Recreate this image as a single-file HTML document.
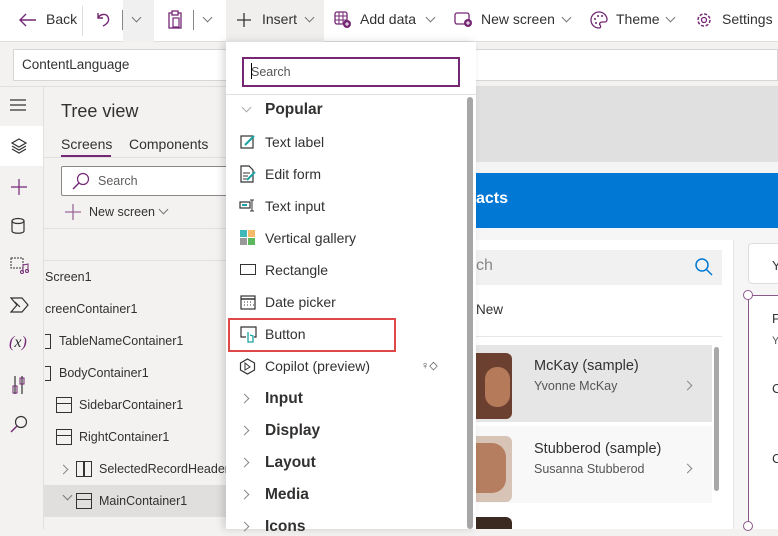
<!DOCTYPE html>
<html><head><style>
*{box-sizing:border-box;margin:0;padding:0}
body{width:778px;height:529px;overflow:hidden;position:relative;font-family:"Liberation Sans",sans-serif;background:#f3f2f1;color:#323130}
.a{position:absolute}
.tb{left:0;top:0;width:778px;height:42px;background:#fff;border-bottom:1px solid #e1dfdd}
.t{position:absolute;top:11px;font-size:14px;color:#323130;white-space:nowrap}
.chev{position:absolute;width:7px;height:7px;border-right:1px solid #777;border-bottom:1px solid #777;transform:rotate(45deg)}
.chr{position:absolute;width:7px;height:7px;border-right:1px solid #888;border-bottom:1px solid #888;transform:rotate(-45deg)}
.tree{position:absolute;left:44px;font-size:12.5px;color:#323130;white-space:nowrap}
.ico2{position:absolute;width:14px;height:16px;border:1.5px solid #333}
.ico2::after{content:"";position:absolute;left:0;right:0;top:5px;border-top:1.5px solid #333}
.di{position:absolute;left:265px;font-size:14px;color:#323130}
.dh{position:absolute;left:265px;font-size:15.5px;font-weight:bold;color:#323130}
</style></head><body>
<div class="a tb"></div>
<!-- toolbar -->
<svg class="a" style="left:18px;top:12px" width="20" height="16"><path d="M18 8H2M8 2L2 8l6 6" stroke="#742774" fill="none" stroke-width="1.4"/></svg>
<div class="t" style="left:46px">Back</div>
<div class="a" style="left:82px;top:6px;width:1px;height:30px;background:#ddd"></div>
<svg class="a" style="left:94px;top:10px" width="18" height="18"><path d="M4 3v5h5M4 8c2-4 8-5 10-1 2 4-1 7-5 9" stroke="#742774" fill="none" stroke-width="1.4"/></svg>
<div class="a" style="left:123px;top:0;width:31px;height:42px;background:#f0f0f0"></div>
<div class="a" style="left:122px;top:10px;width:1px;height:20px;background:#888"></div>
<div class="chev" style="left:133px;top:14px"></div>
<svg class="a" style="left:166px;top:10px" width="18" height="20"><rect x="3" y="3" width="12" height="15" stroke="#742774" fill="none" stroke-width="1.3"/><rect x="6" y="1" width="6" height="4" stroke="#742774" fill="#fff" stroke-width="1.3"/><rect x="7" y="8" width="6" height="9" stroke="#742774" fill="none" stroke-width="1.2"/></svg>
<div class="a" style="left:193px;top:10px;width:1px;height:20px;background:#888"></div>
<div class="chev" style="left:204px;top:14px"></div>
<div class="a" style="left:226px;top:0;width:98px;height:42px;background:#f0efee"></div>
<svg class="a" style="left:236px;top:12px" width="16" height="16"><path d="M8 1v14M1 8h14" stroke="#333" stroke-width="1.3"/></svg>
<div class="t" style="left:262px">Insert</div>
<div class="chev" style="left:306px;top:14px"></div>
<svg class="a" style="left:334px;top:11px" width="18" height="18"><rect x="1" y="1" width="12" height="12" rx="2" stroke="#742774" fill="none" stroke-width="1.3"/><path d="M1 5h12M1 9h12M5 1v12M9 1v12" stroke="#742774" stroke-width="1"/><circle cx="13" cy="13" r="4" fill="#742774"/><path d="M13 11v4M11 13h4" stroke="#fff"/></svg>
<div class="t" style="left:360px">Add data</div>
<div class="chev" style="left:427px;top:14px"></div>
<svg class="a" style="left:454px;top:12px" width="18" height="16"><rect x="1" y="1" width="14" height="11" rx="2" stroke="#742774" fill="none" stroke-width="1.3"/><circle cx="14" cy="11" r="4" fill="#742774"/><path d="M14 9v4M12 11h4" stroke="#fff"/></svg>
<div class="t" style="left:481px">New screen</div>
<div class="chev" style="left:563px;top:14px"></div>
<svg class="a" style="left:590px;top:11px" width="18" height="18"><path d="M9 1a8 8 0 1 0 0 16c2 0 2-2 1-3s0-3 2-3h3c2 0 2-2 2-3A8 8 0 0 0 9 1z" stroke="#742774" fill="none" stroke-width="1.3"/><circle cx="5" cy="8" r="1" fill="#742774"/><circle cx="8" cy="5" r="1" fill="#742774"/><circle cx="12" cy="5" r="1" fill="#742774"/><circle cx="6" cy="12" r="1" fill="#742774"/></svg>
<div class="t" style="left:616px">Theme</div>
<div class="chev" style="left:667px;top:14px"></div>
<svg class="a" style="left:695px;top:11px" width="18" height="18"><circle cx="9" cy="9" r="6" stroke="#742774" fill="none" stroke-width="1.5" stroke-dasharray="3 1.7"/><circle cx="9" cy="9" r="2.5" stroke="#742774" fill="none" stroke-width="1.3"/></svg>
<div class="t" style="left:722px">Settings</div>
<!-- formula bar -->
<div class="a" style="left:0;top:43px;width:778px;height:44px;background:#f3f2f1;border-bottom:1px solid #e1dfdd"></div>
<div class="a" style="left:13px;top:49px;width:765px;height:32px;background:#fff;border:1px solid #d6d6d6"></div>
<div class="a" style="left:22px;top:57px;font-size:13.5px">ContentLanguage</div>
<!-- left rail -->
<div class="a" style="left:0;top:87px;width:44px;height:442px;background:#f3f2f1;border-right:1px solid #e1dfdd"></div>
<div class="a" style="left:0;top:126px;width:43px;height:40px;background:#fff"></div>
<svg class="a" style="left:10px;top:98px" width="18" height="14"><path d="M0 2h16M0 7h16M0 12h16" stroke="#333" stroke-width="1.2"/></svg>
<svg class="a" style="left:10px;top:137px" width="18" height="18"><path d="M9 2l7 4-7 4-7-4zM2 9l7 4 7-4M2 12l7 4 7-4" stroke="#333" fill="none" stroke-width="1.2"/></svg>
<svg class="a" style="left:10px;top:178px" width="18" height="18"><path d="M9 1v16M1 9h16" stroke="#742774" stroke-width="1.2"/></svg>
<svg class="a" style="left:11px;top:217px" width="16" height="18"><ellipse cx="7" cy="4" rx="6" ry="2.5" stroke="#333" fill="none" stroke-width="1.2"/><path d="M1 4v10c0 3 12 3 12 0V4" stroke="#333" fill="none" stroke-width="1.2"/></svg>
<svg class="a" style="left:10px;top:257px" width="20" height="18"><rect x="1" y="1" width="12" height="10" stroke="#333" fill="none" stroke-dasharray="2 1"/><path d="M13 15V8l5-1v7" stroke="#742774" fill="none"/><circle cx="12" cy="15" r="1.5" stroke="#742774" fill="none"/><circle cx="17" cy="14" r="1.5" stroke="#742774" fill="none"/></svg>
<svg class="a" style="left:10px;top:297px" width="20" height="16"><path d="M1 1h11l6 7-6 7H1l6-7z M5 5l5 5M7 3" stroke="#333" fill="none" stroke-width="1.2"/></svg>
<div class="a" style="left:9px;top:334px;font-size:16px;font-style:italic;font-family:'Liberation Serif',serif;color:#742774">(<span style="color:#333">x</span>)</div>
<svg class="a" style="left:12px;top:375px" width="14" height="20"><path d="M3 1v18M10 1v18" stroke="#333" stroke-width="1.2"/><rect x="1" y="11" width="4" height="7" stroke="#742774" fill="none"/><rect x="8" y="3" width="4" height="6" stroke="#742774" fill="none"/></svg>
<svg class="a" style="left:10px;top:415px" width="18" height="18"><circle cx="11" cy="7" r="5.5" stroke="#333" fill="none" stroke-width="1.2"/><path d="M7 11l-6 6" stroke="#742774" stroke-width="1.4"/></svg>
<!-- tree panel -->
<div class="a" style="left:61px;top:101px;font-size:18px;color:#323130">Tree view</div>
<div class="a" style="left:61px;top:136px;font-size:14px">Screens</div>
<div class="a" style="left:61px;top:155px;width:50px;height:3px;background:#742774"></div>
<div class="a" style="left:129px;top:136px;font-size:14px">Components</div>
<div class="a" style="left:44px;top:157px;width:182px;height:1px;background:#e1dfdd"></div>
<div class="a" style="left:61px;top:166px;width:170px;height:30px;background:#fff;border:1px solid #8a8886;border-radius:2px"></div>
<svg class="a" style="left:72px;top:172px" width="18" height="18"><circle cx="11" cy="7" r="5.5" stroke="#742774" fill="none" stroke-width="1.2"/><path d="M7 11l-6 6" stroke="#742774" stroke-width="1.4"/></svg>
<div class="a" style="left:98px;top:174px;font-size:12.5px;color:#605e5c">Search</div>
<svg class="a" style="left:64px;top:203px" width="18" height="18"><path d="M9 1v16M1 9h16" stroke="#9a6a9a" stroke-width="1.3"/></svg>
<div class="a" style="left:89px;top:205px;font-size:12.5px;color:#323130">New screen</div>
<div class="chev" style="left:160px;top:206px"></div>
<div class="a" style="left:44px;top:228px;width:182px;height:1px;background:#e1dfdd"></div>
<div class="a" style="left:44px;top:260px;width:182px;height:1px;background:#e1dfdd"></div>
<div class="tree" style="top:270px;left:45px">Screen1</div>
<div class="tree" style="top:302px;left:45px">creenContainer1</div>
<div class="a" style="left:45px;top:334px;width:6px;height:15px;border:1.3px solid #333;border-left:none"></div>
<div class="tree" style="top:334px;left:59px">TableNameContainer1</div>
<div class="a" style="left:45px;top:366px;width:6px;height:15px;border:1.3px solid #333;border-left:none"></div>
<div class="tree" style="top:366px;left:59px">BodyContainer1</div>
<div class="ico2" style="left:56px;top:397px;width:16px"></div>
<div class="tree" style="top:398px;left:79px">SidebarContainer1</div>
<div class="ico2" style="left:56px;top:429px;width:16px"></div>
<div class="tree" style="top:430px;left:79px">RightContainer1</div>
<div class="chr" style="left:60px;top:466px"></div>
<div class="a" style="left:76px;top:461px;width:16px;height:16px;border:1.5px solid #333"></div>
<div class="a" style="left:83px;top:461px;width:1.5px;height:16px;background:#333"></div>
<div class="tree" style="top:462px;left:99px">SelectedRecordHeaderC</div>
<div class="a" style="left:44px;top:485px;width:182px;height:32px;background:#e1dfdd"></div>
<div class="chev" style="left:64px;top:492px"></div>
<div class="ico2" style="left:76px;top:493px;width:16px"></div>
<div class="tree" style="top:494px;left:99px">MainContainer1</div>
<!-- canvas -->
<div class="a" style="left:476px;top:87px;width:302px;height:442px;background:#e0e0e0"></div>
<div class="a" style="left:476px;top:162px;width:302px;height:11px;background:#f4f4f4"></div>
<div class="a" style="left:476px;top:173px;width:302px;height:55px;background:#0078d4"></div>
<div class="a" style="left:476px;top:190px;font-size:16px;font-weight:bold;color:#fff">acts</div>
<div class="a" style="left:476px;top:228px;width:302px;height:301px;background:#f6f6f6"></div>
<div class="a" style="left:476px;top:240px;width:258px;height:289px;background:#fff;border-right:1px solid #e6e6e6"></div>
<div class="a" style="left:476px;top:250px;width:246px;height:35px;background:#f1f1f1"></div>
<div class="a" style="left:476px;top:257px;font-size:16px;color:#888">ch</div>
<svg class="a" style="left:694px;top:257px" width="20" height="20"><circle cx="8" cy="8" r="6" stroke="#0078d4" fill="none" stroke-width="1.5"/><path d="M12 12l6 6" stroke="#0078d4" stroke-width="1.5"/></svg>
<div class="a" style="left:476px;top:302px;font-size:13.5px">New</div>
<div class="a" style="left:476px;top:336px;width:246px;height:1px;background:#e6e6e6"></div>
<div class="a" style="left:476px;top:345px;width:236px;height:77px;background:#e6e6e6"></div>
<div class="a" style="left:476px;top:353px;width:36px;height:66px;background:#6b4030;border-radius:0 6px 6px 0"></div>
<div class="a" style="left:485px;top:367px;width:25px;height:40px;background:#b47a5a;border-radius:12px"></div>
<div class="a" style="left:534px;top:358px;font-size:14.5px">McKay (sample)</div>
<div class="a" style="left:534px;top:379px;font-size:12.5px;color:#555">Yvonne McKay</div>
<div class="chr" style="left:684px;top:382px"></div>
<div class="a" style="left:476px;top:426px;width:236px;height:77px;background:#f8f8f8"></div>
<div class="a" style="left:476px;top:436px;width:36px;height:66px;background:#d8c4b6;border-radius:0 6px 6px 0"></div>
<div class="a" style="left:476px;top:443px;width:30px;height:50px;background:#b67e60;border-radius:0 14px 14px 0"></div>
<div class="a" style="left:534px;top:441px;font-size:14.5px">Stubberod (sample)</div>
<div class="a" style="left:534px;top:462px;font-size:12.5px;color:#555">Susanna Stubberod</div>
<div class="chr" style="left:684px;top:465px"></div>
<div class="a" style="left:476px;top:517px;width:36px;height:12px;background:#3a2a20;border-radius:0 6px 0 0"></div>
<div class="a" style="left:714px;top:347px;width:5px;height:144px;background:#a8a8a8;border-radius:3px"></div>
<div class="a" style="left:748px;top:243px;width:40px;height:41px;background:#fff;border:1px solid #ddd;border-radius:4px"></div>
<div class="a" style="left:772px;top:258px;font-size:13px">Y</div>
<div class="a" style="left:748px;top:295px;width:30px;height:234px;background:#fff;border-left:1.5px solid #8a5a8a;border-top:1.5px solid #8a5a8a"></div>
<div class="a" style="left:743px;top:290px;width:10px;height:10px;border-radius:50%;background:#fff;border:1.5px solid #8a5a8a"></div>
<div class="a" style="left:743px;top:521px;width:10px;height:10px;border-radius:50%;background:#fff;border:1.5px solid #8a5a8a"></div>
<div class="a" style="left:772px;top:311px;font-size:13px">F</div>
<div class="a" style="left:772px;top:335px;font-size:11px;color:#555">Y</div>
<div class="a" style="left:772px;top:381px;font-size:13px">C</div>
<div class="a" style="left:772px;top:451px;font-size:13px">C</div>
<!-- dropdown -->
<div class="a" style="left:226px;top:42px;width:250px;height:487px;background:#fff;box-shadow:-3px 0 8px rgba(0,0,0,.15)"></div>
<div class="a" style="left:242px;top:57px;width:218px;height:30px;border:2px solid #742774"></div>
<div class="a" style="left:251px;top:65px;font-size:12.5px;color:#555">Search</div>
<div class="a" style="left:251px;top:63px;width:1px;height:16px;background:#000"></div>
<div class="a" style="left:226px;top:94px;width:250px;height:1px;background:#e1dfdd"></div>
<div class="a" style="left:467px;top:97px;width:6px;height:432px;background:#a6a6a6;border-radius:3px"></div>
<div class="chev" style="left:243px;top:104px;border-color:#aaa"></div>
<div class="dh" style="top:101px">Popular</div>
<svg class="a" style="left:240px;top:134px" width="16" height="16"><rect x="1" y="2" width="12" height="12" stroke="#333" fill="none" stroke-width="1.2"/><path d="M5 11l9-9" stroke="#1aa3a3" stroke-width="2"/></svg>
<div class="di" style="top:134px">Text label</div>
<svg class="a" style="left:240px;top:165px" width="16" height="18"><path d="M1 1h8l4 4v12H1z" stroke="#333" fill="none" stroke-width="1.2"/><path d="M3 8h7M3 11h5M3 14h4" stroke="#333"/><path d="M7 15l8-8" stroke="#1aa3a3" stroke-width="2"/></svg>
<div class="di" style="top:166px">Edit form</div>
<svg class="a" style="left:239px;top:199px" width="18" height="14"><rect x="1" y="3" width="10" height="6" stroke="#333" fill="none" stroke-width="1.2"/><path d="M3 6h5" stroke="#1aa3a3" stroke-width="2"/><path d="M13 1v11M11 1h4M11 12h4" stroke="#333"/></svg>
<div class="di" style="top:198px">Text input</div>
<div class="a" style="left:240px;top:230px;width:7px;height:7px;background:#3fb8b8"></div>
<div class="a" style="left:248px;top:230px;width:7px;height:7px;background:#f6b96a"></div>
<div class="a" style="left:240px;top:238px;width:7px;height:7px;background:#999"></div>
<div class="a" style="left:248px;top:238px;width:7px;height:7px;background:#5cb85c"></div>
<div class="di" style="top:230px">Vertical gallery</div>
<div class="a" style="left:240px;top:264px;width:16px;height:11px;border:1.3px solid #333"></div>
<div class="di" style="top:262px">Rectangle</div>
<svg class="a" style="left:240px;top:294px" width="16" height="16"><rect x="1" y="2" width="14" height="13" stroke="#333" fill="none" stroke-width="1.2"/><path d="M1 5h14" stroke="#333" stroke-width="1.5"/><path d="M4 8h1M7 8h1M10 8h1M4 11h1M7 11h1M10 11h1M13 11h1" stroke="#333"/></svg>
<div class="di" style="top:294px">Date picker</div>
<div class="a" style="left:228px;top:318px;width:168px;height:34px;border:2px solid #e04848"></div>
<svg class="a" style="left:240px;top:326px" width="18" height="18"><path d="M6 11H1V1h15v10h-2" stroke="#333" fill="none" stroke-width="1.2"/><path d="M8 6v10h5v-6l-3-1" stroke="#1aa3a3" fill="none" stroke-width="1.3"/></svg>
<div class="di" style="top:326px">Button</div>
<svg class="a" style="left:239px;top:358px" width="17" height="17"><path d="M8.5 1l7 4v7l-7 4-7-4V5z" stroke="#333" fill="none" stroke-width="1.2"/><path d="M6 5v7l5-3z" stroke="#333" fill="none"/></svg>
<div class="di" style="top:358px">Copilot (preview)</div>
<div class="a" style="left:421px;top:359px;font-size:11px;color:#444">♀◇</div>
<div class="chr" style="left:241px;top:395px"></div><div class="dh" style="top:390px">Input</div>
<div class="chr" style="left:241px;top:427px"></div><div class="dh" style="top:422px">Display</div>
<div class="chr" style="left:241px;top:459px"></div><div class="dh" style="top:454px">Layout</div>
<div class="chr" style="left:241px;top:491px"></div><div class="dh" style="top:486px">Media</div>
<div class="chr" style="left:241px;top:523px"></div><div class="dh" style="top:518px">Icons</div>
</body></html>
